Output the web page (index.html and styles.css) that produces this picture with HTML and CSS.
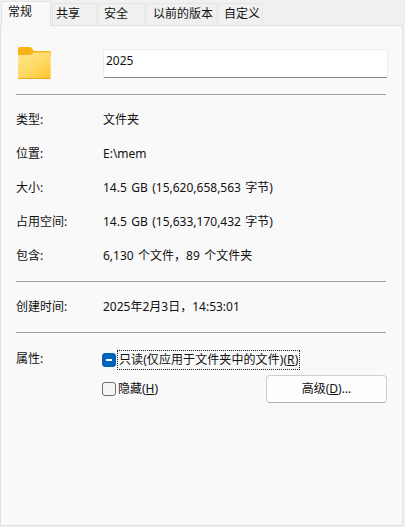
FILE: index.html
```html
<!DOCTYPE html>
<html lang="zh-CN">
<head>
<meta charset="utf-8">
<title>2025 属性</title>
<link rel="stylesheet" href="styles.css">
</head>
<body>
<div class="tabs">
  <div class="tab active">常规</div>
  <div class="tab w45 tight">共享</div>
  <div class="tab w47">安全</div>
  <div class="tab w71 wide">以前的版本</div>
  <div class="tab w45">自定义</div>
</div>
<main class="panel">
  <div class="head">
    <svg class="folder" width="34" height="34" viewBox="0 0 34 34">
      <defs>
        <linearGradient id="fg" x1="0.1" y1="0" x2="0.9" y2="1">
          <stop offset="0" stop-color="#ffe48c"/>
          <stop offset="0.55" stop-color="#ffd964"/>
          <stop offset="1" stop-color="#ffc62e"/>
        </linearGradient>
      </defs>
      <path d="M1 2C1 .8 1.800 0 3 0h9.500c.8 0 1.400.3 2 .8L17 4h15.800c.5 0 .9.400.9.800V10H1z" fill="#f7b414"/>
      <path d="M1 8h11.500c.8 0 1.500-.3 2-.8L17 5.500h15.800c.5 0 .9.300.9.800v24.400c0 .7-.6 1.300-1.300 1.300H2.300C1.600 32 1 31.400 1 30.700z" fill="url(#fg)"/>
      <path d="M1 31h32.700v.1c0 .5-.4.900-.9.900H1.900c-.5 0-.9-.4-.9-.9z" fill="#e9a917"/>
    </svg>
    <div class="name">2025</div>
  </div>
  <hr class="rule first">
  <section class="rows">
    <div class="row"><span class="label">类型:</span><span>文件夹</span></div>
    <div class="row"><span class="label">位置:</span><span>E:\mem</span></div>
    <div class="row"><span class="label">大小:</span><span>14.5 GB (15,620,658,563 字节)</span></div>
    <div class="row"><span class="label">占用空间:</span><span>14.5 GB (15,633,170,432 字节)</span></div>
    <div class="row"><span class="label">包含:</span><span>6,130 个文件，89 个文件夹</span></div>
  </section>
  <hr class="rule second">
  <div class="row created"><span class="label">创建时间:</span><span>2025年2月3日，14:53:01</span></div>
  <hr class="rule third">
  <section class="attrs">
    <span class="label attr-label">属性:</span>
    <div class="attr-body">
      <div class="check-row">
        <span class="box mixed"><span class="dash"></span></span>
        <span class="focus">只读(仅应用于文件夹中的文件)(<u>R</u>)</span>
      </div>
      <div class="check-row second-check">
        <span class="box"></span>
        <span class="plain">隐藏(<u>H</u>)</span>
        <button class="btn" type="button">高级(<u>D</u>)...</button>
      </div>
    </div>
  </section>
</main>
</body>
</html>
```
FILE: styles.css
```css
* { box-sizing: border-box; }
html, body { margin: 0; padding: 0; }
body {
  width: 405px;
  height: 527px;
  overflow: hidden;
  background: #f0f0f0;
  color: #111;
  font-family: "Noto Sans", "Noto Sans CJK SC", sans-serif;
  font-size: 12px;
  line-height: 16px;
  word-spacing: 1.300px;
}
.tabs {
  display: flex;
  align-items: flex-end;
  height: 25px;
  padding-left: 1px;
  gap: 1px;
  position: relative;
  z-index: 1;
}
.tab {
  height: 22px;
  padding-left: 5px;
  line-height: 19px;
  background: #f0f0f0;
  border: 1px solid #e6e6e6;
  border-bottom: 0;
}
.tab.tight { padding-left: 3px; }
.tab.wide { padding-left: 6px; }
.w45 { width: 45px; }
.w47 { width: 47px; }
.w71 { width: 71px; }
.tab.active {
  width: 50px;
  height: 25px;
  padding-left: 6px;
  line-height: 20px;
  background: #f9f9f9;
  border-color: #e2e2e2;
  margin-bottom: -1px;
}
.panel {
  width: 403px;
  height: 501px;
  background: #f9f9f9;
  border: 1px solid #e2e2e2;
  padding: 0 15px;
}
.head {
  display: flex;
  align-items: flex-start;
  height: 68px;
  padding-top: 21px;
}
.folder { margin-left: 1px; flex: none; }
.name {
  flex: none;
  margin: 2px 0 0 52px;
  width: 285px;
  height: 29px;
  padding: 1px 0 0 2px;
  background: #fff;
  border: 1px solid #ececec;
  border-bottom: 1px solid #868686;
  border-radius: 2px;
  line-height: 20px;
}
.rule {
  margin: 0;
  width: 370px;
  height: 1px;
  border: 0;
  background: #a0a0a0;
}
.rows { padding-top: 8px; }
.row {
  display: flex;
  height: 34px;
  align-items: center;
}
.label { width: 87px; flex: none; }
.second { margin-top: 8px; }
.created { margin-top: 7px; height: 36px; }
.third { margin-top: 7px; }
.attrs { display: flex; padding-top: 18px; }
.attr-body { flex: 1; margin-left: -1px; }
.check-row { display: flex; align-items: center; }
.box {
  width: 14px;
  height: 14px;
  flex: none;
  border: 1px solid #6f6f6f;
  border-radius: 3px;
  background: #f5f5f5;
  margin-right: 2px;
}
.box.mixed {
  background: #0062b8;
  border-color: #0062b8;
  display: flex;
  align-items: center;
  justify-content: center;
}
.dash { width: 6px; height: 1.500px; background: #fff; }
.focus {
  outline: 1px dotted #222;
  height: 18px;
  line-height: 18px;
  padding: 0 1px;
  letter-spacing: 0.080px;
  white-space: nowrap;
}
.plain { white-space: nowrap; }
.second-check { margin-top: 6px; }
.btn {
  margin-left: auto;
  width: 121px;
  height: 28px;
  padding: 0;
  background: #fdfdfd;
  border: 1px solid #cfcfcf;
  border-bottom-color: #b4b4b4;
  border-radius: 4px;
  color: inherit;
  font: inherit;
}
```
